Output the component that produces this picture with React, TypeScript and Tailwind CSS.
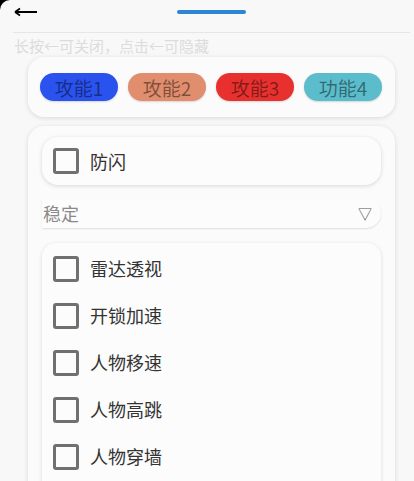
import { useState } from 'react';

const tabs = [
  { label: '攻能1', bg: 'bg-[#2a52ee]' },
  { label: '攻能2', bg: 'bg-[#e08e6d]' },
  { label: '攻能3', bg: 'bg-[#e8312f]' },
  { label: '功能4', bg: 'bg-[#5bbccb]' },
];

const features = ['雷达透视', '开锁加速', '人物移速', '人物高跳', '人物穿墙'];

function Box({ checked, onClick }: { checked: boolean; onClick: () => void }) {
  return (
    <button
      onClick={onClick}
      className={`w-[26px] h-[26px] shrink-0 rounded-[3px] border-[3px] border-[#707070] ${checked ? 'bg-[#707070]' : 'bg-transparent'}`}
    />
  );
}

export default function App() {
  const [checks, setChecks] = useState<Record<string, boolean>>({});
  const toggle = (k: string) => setChecks(c => ({ ...c, [k]: !c[k] }));

  return (
    <div className="h-[481px] overflow-hidden bg-black font-['Noto_Sans_CJK_SC','Noto_Sans',sans-serif]">
      <div className="h-full rounded-tl-[10px] bg-[#f8f8f8] pl-[13px] pr-[4px]">
        <div className="flex items-center h-[33px] border-b border-[#e6e6e6]">
          <div className="w-[25px] -mt-[9px] ml-[1px] flex items-center">
            <svg width="24" height="10" viewBox="0 0 24 10">
              <path d="M1 5 H23" stroke="#000" strokeWidth="2" />
              <path d="M1 5 L6 1.5 M1 5 L6 8.5" stroke="#000" strokeWidth="1.6" fill="none" />
            </svg>
          </div>
          <div className="ml-[138px] -mt-[9px] w-[69px] h-[4px] rounded-full bg-[#2d86d4]" />
        </div>
        <div className="text-[15px] leading-none text-[#dcdcdc] mt-[5px] ml-[1px]">长按←可关闭，点击←可隐藏</div>

        <div className="mx-[15px] mt-[4px] rounded-[16px] bg-[#fbfbfb] shadow-[0_1px_5px_rgba(0,0,0,0.13)] h-[60px] flex items-center gap-[10px] pl-[12px]">
          {tabs.map(t => (
            <div
              key={t.label}
              className={`${t.bg} w-[78px] h-[28px] rounded-full flex items-center justify-center text-[19px] leading-none text-black/45 shadow-[0_1px_2px_rgba(0,0,0,0.15)]`}
            >
              {t.label}
            </div>
          ))}
        </div>

        <div className="mx-[15px] mt-[9px] rounded-t-[16px] bg-[#fbfbfb] shadow-[0_1px_5px_rgba(0,0,0,0.13)] h-[400px] px-[14px] pt-[11px]">
          <div className="h-[48px] rounded-[16px] bg-[#fcfcfc] shadow-[0_1px_4px_rgba(0,0,0,0.15)] flex items-center pl-[11px] gap-[11px]">
            <Box checked={!!checks['防闪']} onClick={() => toggle('防闪')} />
            <span className="text-[18px] text-[#333]">防闪</span>
          </div>

          <div className="mt-[13px] h-[30px] rounded-r-full bg-[#fcfcfc] shadow-[0_1px_2px_rgba(0,0,0,0.12)] flex items-center justify-between pr-[9px]">
            <span className="text-[18px] text-[#8a8a8a] ml-[1px]">稳定</span>
            <span className="text-[14px] text-[#555] leading-none">▽</span>
          </div>

          <div className="mt-[15px] rounded-t-[14px] bg-[#fcfcfc] shadow-[0_1px_4px_rgba(0,0,0,0.13)] pt-[2px] pl-[11px] h-[300px]">
            {features.map(f => (
              <div key={f} className="h-[47px] flex items-center gap-[11px]">
                <Box checked={!!checks[f]} onClick={() => toggle(f)} />
                <span className="text-[18px] text-[#333]">{f}</span>
              </div>
            ))}
          </div>
        </div>
      </div>
    </div>
  );
}
